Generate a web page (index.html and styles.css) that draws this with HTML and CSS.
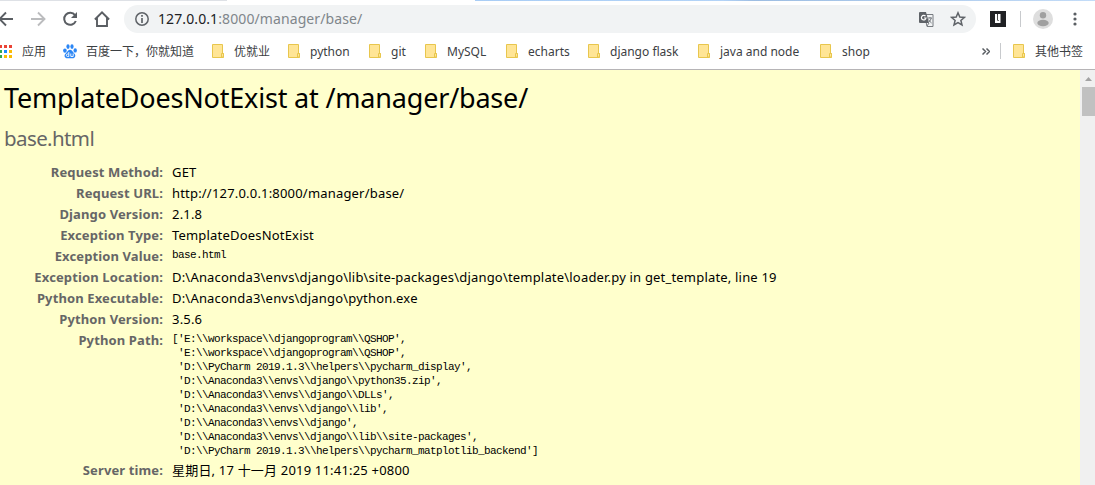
FILE: index.html
```html
<!DOCTYPE html>
<html lang="zh-CN">
<head>
<meta charset="utf-8">
<title>TemplateDoesNotExist at /manager/base/</title>
<link rel="stylesheet" href="styles.css">
</head>
<body>
<svg class="defs" width="0" height="0">
  <symbol id="folder" viewBox="0 0 13 15"><path d="M.5.5h10v9h1v4h-11z" fill="#ffe596" stroke="#e8c64d"/><path d="M9.500 13V9.500h2V13z" fill="#ffe596" stroke="#e8c64d"/></symbol>
</svg>
<div class="tabs"><i class="tab-left"></i><i class="tab-right"></i></div>
<header class="toolbar">
  <nav class="nav">
    <svg width="14" height="18" viewBox="0 0 14 18"><path d="M13 9H-1M6 2.500L-.5 9 6 15.500" fill="none" stroke="#5a5e63" stroke-width="1.900"/></svg>
    <svg width="16" height="18" viewBox="0 0 16 18"><path d="M0 9h13M7 2.500L13.500 9l-6.500 6.500" fill="none" stroke="#bbbcbe" stroke-width="1.900"/></svg>
    <svg width="16" height="18" viewBox="0 0 16 18"><path d="M13 5.200A6 6 0 1 0 13.800 11" fill="none" stroke="#5a5e63" stroke-width="2"/><path d="M15 2v6H9z" fill="#5a5e63"/></svg>
    <svg width="16" height="18" viewBox="0 0 16 18"><path d="M.9 9.500L8 2.300l7.100 7.200M3 8v8h10V8" fill="none" stroke="#5a5e63" stroke-width="1.900"/></svg>
  </nav>
  <div class="omnibox">
    <svg class="info" width="14" height="14" viewBox="0 0 14 14"><circle cx="7" cy="7" r="6.200" fill="none" stroke="#5f6368" stroke-width="1.500"/><path d="M7 3v1.700M7 6v5" stroke="#5f6368" stroke-width="1.700"/></svg>
    <span class="url"><b>127.0.0.1</b>:8000/manager/base/</span>
    <svg class="translate" width="15" height="15" viewBox="0 0 15 15"><path d="M5.500 2.500h8.500v12H8z" fill="#f1f3f4" stroke="#777b80"/><path d="M0 1q0-1 1-1h6l3 11H1q-1 0-1-1z" fill="#5f6368"/><path d="M6.500 4.200A2.300 2.300 0 1 0 7 6H5" fill="none" stroke="#fff" stroke-width="1.200"/><path d="M8.500 6H13M11 5v1m1.300 0q-.6 3-3 4.500M9.600 7.500q1 2 3 3.500M8 14l2-3" fill="none" stroke="#777b80"/></svg>
    <svg class="star" width="16" height="16" viewBox="0 0 16 16"><path d="M8 1.800l1.800 4.200 4.600.4-3.500 3 1.100 4.500L8 11.500l-4 2.400 1.100-4.500-3.500-3 4.600-.4z" fill="none" stroke="#5f6368" stroke-width="1.500"/></svg>
  </div>
  <svg class="ext" width="16" height="16" viewBox="0 0 16 16"><path d="M0 0h16v16H0z" fill="#202124"/><path d="M5 3h2v6h1V3h2.500v9H5z" fill="#fff"/><path d="M7.500 3.500v6h1.500" fill="none" stroke="#555" stroke-width=".8"/></svg>
  <i class="divider"></i>
  <svg class="avatar" width="20" height="20" viewBox="0 0 20 20"><circle cx="10" cy="10" r="10" fill="#dedede"/><circle cx="10" cy="6.200" r="3.200" fill="#a0a0a0"/><ellipse cx="10" cy="14" rx="5.700" ry="3.200" fill="#a0a0a0"/></svg>
  <svg class="more" width="4" height="14" viewBox="0 0 4 14"><g fill="#5a5e63"><circle cx="2" cy="2" r="1.600"/><circle cx="2" cy="7" r="1.600"/><circle cx="2" cy="12" r="1.600"/></g></svg>
</header>
<nav class="bookmarks">
  <a class="apps"><svg width="12" height="13" viewBox="0 0 12 13"><path d="M-1 0h3v3h-3zM4 0h3v3H4zM9 0h3v3H9z" fill="#ea4335"/><path d="M-1 5h3v3h-3zM-1 10h3v3h-3z" fill="#34a853"/><path d="M4 5h3v3H4z" fill="#1a8cff"/><path d="M9 5h3v3H9zM4 10h3v3H4zM9 10h3v3H9z" fill="#fbbc05"/></svg><span>应用</span></a>
  <a class="baidu"><svg width="14" height="15" viewBox="0 0 14 15"><g fill="#2b86f5"><ellipse cx="1.900" cy="6.600" rx="1.800" ry="2.200"/><ellipse cx="5" cy="2.600" rx="1.600" ry="2.400"/><ellipse cx="9" cy="2.600" rx="1.600" ry="2.400"/><ellipse cx="12.200" cy="6.400" rx="1.700" ry="2.200"/><path d="M7 5.800c1.800 0 2.400 1.800 3.800 3.200 3 2.500 1 5.700-1.600 5.300H4.800C2 14.700 0 11.500 3.200 9 4.800 7.600 5.200 5.800 7 5.800z"/></g><path d="M5.800 8v4.500H4.600a1.200 1.200 0 0 1 0-2.500h1.200M7.800 9.500v3h2.400v-3" fill="none" stroke="#fff" stroke-width=".9"/></svg><span>百度一下，你就知道</span></a>
  <a><svg><use href="#folder"/></svg><span>优就业</span></a>
  <a><svg><use href="#folder"/></svg><span>python</span></a>
  <a><svg><use href="#folder"/></svg><span>git</span></a>
  <a><svg><use href="#folder"/></svg><span>MySQL</span></a>
  <a><svg><use href="#folder"/></svg><span>echarts</span></a>
  <a><svg><use href="#folder"/></svg><span>django flask</span></a>
  <a><svg><use href="#folder"/></svg><span>java and node</span></a>
  <a><svg><use href="#folder"/></svg><span>shop</span></a>
  <span class="overflow"><svg width="8" height="7" viewBox="0 0 8 7"><path d="M.5.500l3 3-3 3M4.500.5l3 3-3 3" fill="none" stroke="#5a5e63" stroke-width="1.500"/></svg></span>
  <a class="other"><svg><use href="#folder"/></svg><span>其他书签</span></a>
</nav>
<main class="viewport">
  <section class="summary">
    <h1>TemplateDoesNotExist at /manager/base/</h1>
    <p class="exception">base.html</p>
    <dl class="meta">
      <dt>Request Method:</dt><dd>GET</dd>
      <dt>Request URL:</dt><dd>http://127.0.0.1:8000/manager/base/</dd>
      <dt>Django Version:</dt><dd>2.1.8</dd>
      <dt>Exception Type:</dt><dd>TemplateDoesNotExist</dd>
      <dt>Exception Value:</dt><dd><pre>base.html</pre></dd>
      <dt>Exception Location:</dt><dd>D:\Anaconda3\envs\django\lib\site-packages\django\template\loader.py in get_template, line 19</dd>
      <dt>Python Executable:</dt><dd>D:\Anaconda3\envs\django\python.exe</dd>
      <dt>Python Version:</dt><dd>3.5.6</dd>
      <dt>Python Path:</dt><dd><pre>['E:\\workspace\\djangoprogram\\QSHOP',
 'E:\\workspace\\djangoprogram\\QSHOP',
 'D:\\PyCharm 2019.1.3\\helpers\\pycharm_display',
 'D:\\Anaconda3\\envs\\django\\python35.zip',
 'D:\\Anaconda3\\envs\\django\\DLLs',
 'D:\\Anaconda3\\envs\\django\\lib',
 'D:\\Anaconda3\\envs\\django',
 'D:\\Anaconda3\\envs\\django\\lib\\site-packages',
 'D:\\PyCharm 2019.1.3\\helpers\\pycharm_matplotlib_backend']</pre></dd>
      <dt>Server time:</dt><dd>星期日, 17 十一月 2019 11:41:25 +0800</dd>
    </dl>
  </section>
  <div class="scrollbar"><svg width="7" height="4" viewBox="0 0 7 4"><path d="M0 4l3.500-4L7 4z" fill="#a3a3a3"/></svg><i class="thumb"></i></div>
</main>
</body>
</html>
```
FILE: styles.css
```css
* { box-sizing: border-box; }
body {
  margin: 0;
  width: 1095px;
  height: 485px;
  overflow: hidden;
  background: #fff;
  font-family: "Noto Sans", "Noto Sans CJK SC", sans-serif;
}
svg { display: block; flex: none; overflow: hidden; }
.defs { position: absolute; }
.tabs { display: flex; justify-content: space-between; height: 1px; }
.tab-left { width: 227px; background: #dee1e6; }
.tab-right { width: 620px; background: linear-gradient(90deg, #a9cdf5, #b3d3f7 40%, #9dbde2 45%, #c3dcf8); }

.toolbar { display: flex; align-items: center; height: 36px; }
.nav { display: flex; width: 124px; gap: 17px; }
.nav svg:nth-child(3) { margin-left: -2px; }
.nav svg:nth-child(4) { margin-left: -1px; }
.omnibox {
  display: flex;
  align-items: center;
  width: 852px;
  height: 28px;
  padding: 0 10px 0 11px;
  border-radius: 14px;
  background: #f1f3f4;
}
.url { margin-left: 9px; font-size: 14px; line-height: 20px; letter-spacing: 0.1px; color: #80868b; }
.url b { font-weight: 400; color: #202124; }
.translate { margin-left: auto; margin-right: 16px; }
.ext { margin-left: 14px; }
.divider { width: 1px; height: 16px; margin: 0 12px 0 14px; background: #c8cacd; }
.more { margin-left: 20px; }

.bookmarks {
  display: grid;
  grid-template-columns: 63px 149px 76px 81px 56px 81px 82px 110px 122px 162px 18px 95px;
  align-items: center;
  height: 33px;
  padding-bottom: 4px;
  border-bottom: 1px solid #b6b4b6;
  font-size: 12px;
  line-height: 18px;
  color: #3c4043;
  white-space: nowrap;
}
.bookmarks a { display: flex; align-items: center; }
.bookmarks a span { padding-top: 2px; }
.bookmarks a svg { width: 13px; height: 15px; margin-right: 9px; }
.bookmarks .apps svg { width: 12px; height: 13px; margin-right: 10px; }
.bookmarks .baidu svg { width: 14px; }
.bookmarks .other { height: 16px; padding-left: 12px; border-left: 1px solid #c8cacd; }

.viewport { display: flex; height: 415px; }
.summary { width: 1080px; padding: 8px 0 0 4px; background: #ffc; color: #000; }
.summary h1 { margin: 0; font-size: 27px; font-weight: 400; line-height: 40px; letter-spacing: -0.19px; }
.exception { margin: 5px 0 0; font-size: 20.5px; line-height: 30px; letter-spacing: -0.6px; color: #666; }
.meta {
  display: grid;
  grid-template-columns: 159px 1fr;
  column-gap: 9px;
  margin: 9px 0 0;
  font-size: 13px;
  line-height: 21px;
}
.meta dt { font-weight: 700; text-align: right; letter-spacing: 0.12px; color: #666; }
.meta dd { margin: 0; white-space: nowrap; letter-spacing: 0.19px; }
.meta pre {
  margin: 0;
  padding: 2px 0;
  font: 11px/14px "Liberation Mono", monospace;
  letter-spacing: -0.6px;
}
.scrollbar { width: 15px; padding-top: 7px; background: #f0f0f0; }
.scrollbar svg { margin-left: 5px; }
.thumb { display: block; height: 29px; margin: 6px 0 0 2px; background: #c1c1c1; }
```
